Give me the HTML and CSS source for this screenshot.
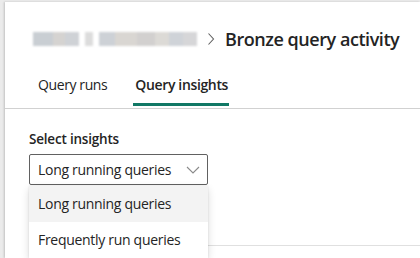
FILE: index.html
```html
<!DOCTYPE html>
<html lang="en">
<head>
  <meta charset="UTF-8" />
  <title>Bronze query activity</title>
  <link rel="stylesheet" href="styles.css">
</head>
<body>
  <div class="panel">
    <div class="crumbs">
      <!-- workspace name is blurred in the shot -->
      <span class="blur">
        <i style="width:20px;background:#c9ced3"></i><i style="width:12px;background:#d5d3d1"></i><i style="width:14px;background:#cfd2d6"></i>
        <i class="gap"></i>
        <i style="width:8px;background:#dcdcdc"></i>
        <i class="gap"></i>
        <i style="width:16px;background:#cdd1d6"></i><i style="width:22px;background:#d9d6d2"></i><i style="width:18px;background:#d2d0cf"></i><i style="width:14px;background:#dcdad6"></i><i style="width:14px;background:#cfd3d8"></i><i style="width:14px;background:#d6d6d8"></i>
      </span>
      <svg class="sep" width="8" height="14" viewBox="0 0 8 14"><path d="M1.5 1.5 L6.5 7 L1.5 12.5" fill="none" stroke="#616161" stroke-width="1.1"/></svg>
      <h1>Bronze query activity</h1>
    </div>

    <nav class="tabs">
      <a href="#">Query runs</a>
      <a href="#" class="active">Query insights</a>
    </nav>

    <main class="content">
      <label class="field-label">Select insights</label>
      <div class="select-wrap">
        <div class="select">
          <span>Long running queries</span>
          <svg width="14" height="8" viewBox="0 0 14 8"><path d="M1 1 L7 7 L13 1" fill="none" stroke="#8a8a8a" stroke-width="1.1"/></svg>
        </div>
        <ul class="menu">
          <li class="hover">Long running queries</li>
          <li>Frequently run queries</li>
        </ul>
      </div>
      <div class="rule"></div>
    </main>
  </div>
</body>
</html>
```

FILE: styles.css
```css
body {
  margin: 0;
  font-family: 'Open Sans', 'Noto Sans', sans-serif;
  background-color: #ebebeb;
  color: #242424;
  height: 258px;
  overflow: hidden;
}
.panel {
  margin: 2px 0 0 5px;
  background: #fff;
  height: 256px;
  box-shadow: -1px 0 2px rgba(0,0,0,0.18);
}
.crumbs {
  display: flex;
  align-items: center;
  height: 37px;
  padding: 18px 0 0 28px;
}
.blur {
  display: flex;
  align-items: center;
  height: 16px;
  filter: blur(1px);
}
.blur i {
  display: block;
  height: 14px;
}
.blur i.gap {
  width: 6px;
}
.sep {
  margin: 0 10px 0 10px;
}
h1 {
  margin: 0;
  font-size: 18px;
  font-weight: 600;
  letter-spacing: -0.45px;
}
.tabs {
  display: flex;
  gap: 25px;
  padding: 0 0 2px 31px;
  margin-top: 10px;
  border-bottom: 1px solid #d1d1d1;
}
.tabs a {
  color: #242424;
  text-decoration: none;
  font-size: 14px;
  line-height: 19px;
  padding: 8px 1px 9px 2px;
  border-bottom: 3px solid transparent;
  letter-spacing: -0.4px;
}
.tabs a.active {
  font-weight: 600;
  letter-spacing: -0.35px;
  border-bottom-color: #117865;
}
.content {
  padding: 21px 0 0 24px;
}
.field-label {
  display: block;
  font-size: 13.5px;
  line-height: 19px;
  font-weight: 600;
  margin-bottom: 5px;
  letter-spacing: -0.2px;
}
.select-wrap {
  position: relative;
  width: 179px;
}
.select {
  display: flex;
  align-items: center;
  justify-content: space-between;
  height: 29px;
  padding: 0 7px 0 8px;
  border: 1px solid #616161;
  border-radius: 2px;
  font-size: 14px;
  letter-spacing: -0.3px;
}
.menu {
  position: absolute;
  top: 32px;
  left: 0;
  width: 179px;
  margin: 0;
  padding: 0;
  list-style: none;
  background: #fff;
  box-shadow: 0 3px 8px rgba(0,0,0,0.14), 0 0 2px rgba(0,0,0,0.1);
  z-index: 2;
}
.menu li {
  height: 36px;
  line-height: 36px;
  padding-left: 9px;
  font-size: 14px;
  letter-spacing: -0.3px;
}
.menu li.hover {
  background: #f3f3f3;
}
.rule {
  margin-top: 60px;
  border-top: 1px solid #e0e0e0;
}
```
